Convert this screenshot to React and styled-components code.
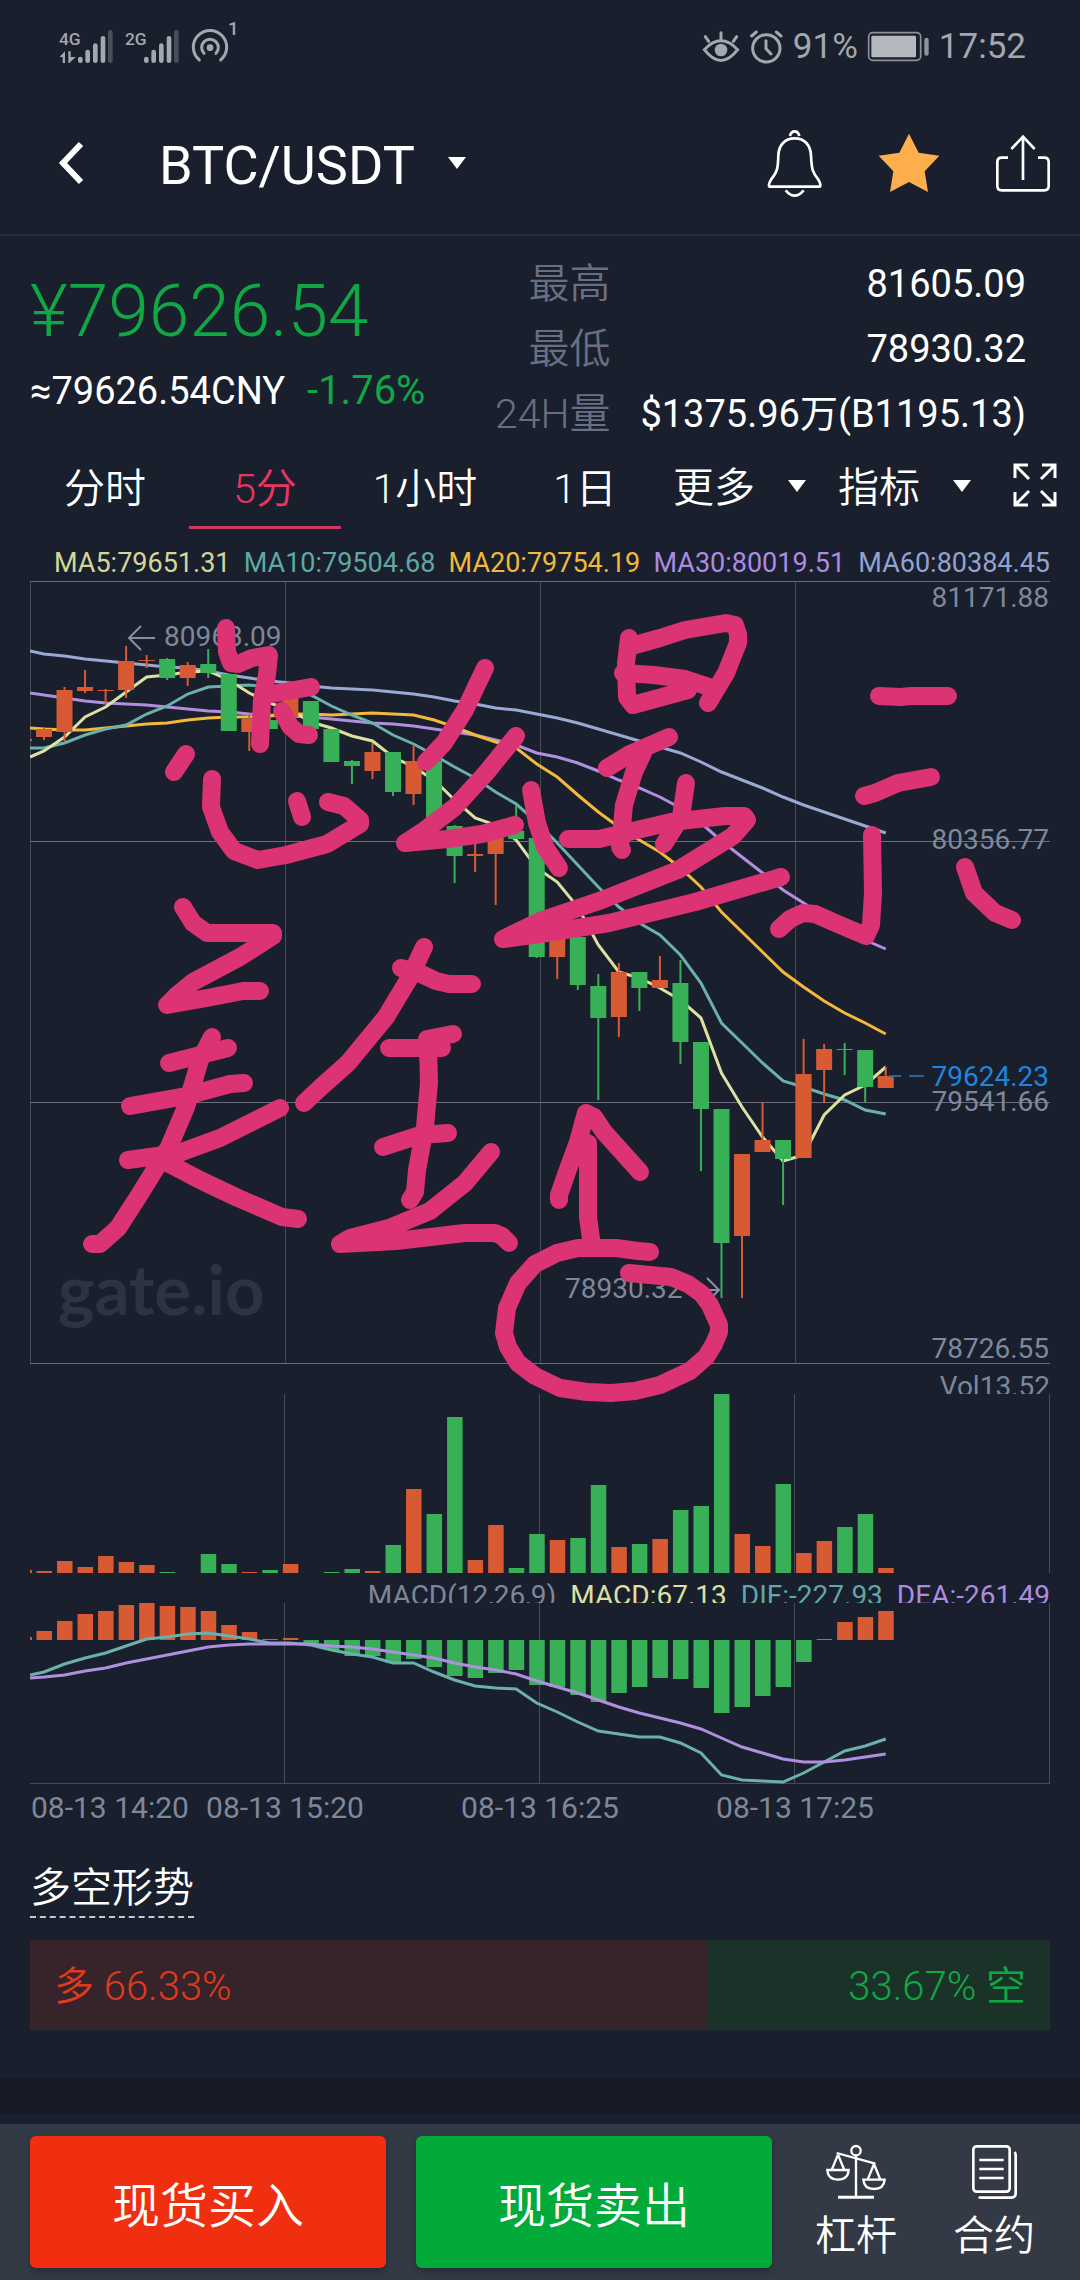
import React, { useState } from "react";
import styled, { createGlobalStyle } from "styled-components";

const UP = "#d85a33";
const DOWN = "#38b058";

// x of the first full candle and the distance between candles
const FIRST_X = 44;
const STEP = 20.53;
const xOf = (i) => FIRST_X + STEP * i;

// [up, high, top, bottom, low]
const candles = [
  [1, 727, 729, 737, 740], [1, 687, 690, 732, 741], [1, 670, 687, 691, 693],
  [1, 689, 690, 691, 704], [1, 646, 661, 690, 698], [1, 655, 660, 661, 668],
  [0, 658, 659, 678, 680], [1, 662, 665, 678, 686], [0, 649, 664, 673, 678],
  [0, 674, 674, 731, 731], [1, 714, 719, 732, 751], [0, 717, 720, 729, 729],
  [1, 692, 697, 717, 719], [0, 701, 701, 729, 729], [0, 729, 729, 762, 762],
  [0, 760, 761, 766, 784], [1, 743, 752, 771, 779], [0, 752, 752, 792, 796],
  [1, 746, 761, 794, 805], [0, 761, 761, 827, 827], [0, 825, 826, 856, 883],
  [1, 842, 854, 856, 872], [1, 832, 837, 854, 905], [0, 805, 831, 839, 839],
  [0, 838, 838, 957, 958], [1, 930, 935, 957, 979], [0, 937, 937, 985, 990],
  [0, 974, 986, 1018, 1100], [1, 963, 972, 1017, 1037], [0, 972, 972, 988, 1011],
  [1, 956, 980, 988, 988], [0, 960, 983, 1042, 1064], [0, 1042, 1042, 1109, 1171],
  [0, 1109, 1109, 1243, 1298], [1, 1154, 1154, 1236, 1298], [1, 1102, 1140, 1152, 1152],
  [0, 1140, 1140, 1159, 1205], [1, 1039, 1074, 1158, 1158], [1, 1044, 1049, 1070, 1103],
  [0, 1043, 1049, 1050, 1075], [0, 1050, 1050, 1087, 1102], [1, 1067, 1076, 1088, 1088],
];

const volumes = [
  2, 12, 6, 17, 11, 8, 1, 0, 19, 9, 1, 3, 9, 0, 1, 4, 2, 28, 84, 59, 156, 13, 48, 5,
  39, 33, 35, 88, 26, 29, 34, 63, 67, 180, 39, 27, 89, 20, 32, 46, 59, 5,
];

const macd = [
  9, 19, 26, 29, 35, 37, 34, 33, 29, 15, 8, 1, 2, -3, -10, -16, -16, -23, -19, -27, -36,
  -38, -33, -30, -45, -47, -55, -62, -53, -47, -38, -39, -48, -73, -67, -56, -47, -22,
  1, 18, 23, 29,
];

// the first value of every line is at the left edge of the panel
const averages = [
  {
    color: "#9aa8d4",
    ys: [651, 654, 656, 659, 661, 663, 665, 667, 668, 671, 675, 678, 681, 683, 686, 688, 689, 690, 692, 694, 697, 701, 704, 708, 710, 714, 718, 723, 729, 735, 741, 747, 753, 762, 772, 780, 788, 797, 805, 812, 819, 826, 833],
  },
  {
    color: "#b08fe0",
    ys: [693, 695, 698, 701, 703, 704, 705, 707, 709, 711, 712, 714, 715, 716, 717, 719, 721, 723, 724, 726, 729, 732, 735, 740, 745, 753, 757, 763, 771, 780, 788, 797, 808, 823, 841, 857, 873, 890, 903, 917, 928, 940, 949],
  },
  {
    color: "#f2b93b",
    ys: [728, 729, 730, 730, 728, 726, 724, 723, 720, 718, 717, 717, 716, 714, 714, 715, 714, 713, 714, 715, 720, 727, 735, 742, 748, 764, 777, 795, 812, 827, 840, 852, 868, 887, 912, 932, 952, 972, 987, 1001, 1013, 1023, 1034],
  },
  {
    color: "#6bb0ab",
    ys: [748, 748, 743, 735, 729, 725, 714, 706, 694, 687, 686, 685, 687, 690, 695, 706, 715, 723, 735, 744, 755, 767, 778, 792, 804, 822, 843, 865, 887, 907, 923, 935, 955, 983, 1023, 1043, 1063, 1081, 1087, 1094, 1100, 1110, 1114],
  },
  {
    color: "#dde0a0",
    ys: [757, 751, 737, 717, 707, 692, 677, 675, 672, 671, 680, 693, 703, 710, 722, 728, 736, 741, 757, 767, 780, 800, 818, 825, 840, 868, 882, 907, 945, 972, 978, 988, 1000, 1018, 1073, 1107, 1137, 1161, 1155, 1115, 1095, 1085, 1067],
  },
];

const dif = [1675, 1672, 1664, 1658, 1653, 1646, 1639, 1637, 1634, 1633, 1636, 1639, 1643, 1643, 1645, 1650, 1654, 1657, 1663, 1663, 1672, 1680, 1686, 1688, 1689, 1703, 1712, 1722, 1731, 1734, 1737, 1737, 1743, 1753, 1775, 1780, 1781, 1782, 1773, 1762, 1751, 1746, 1739];
const dea = [1678, 1677, 1675, 1671, 1668, 1663, 1659, 1655, 1651, 1647, 1645, 1644, 1644, 1644, 1644, 1646, 1647, 1649, 1652, 1655, 1658, 1663, 1667, 1670, 1674, 1681, 1687, 1693, 1700, 1707, 1713, 1718, 1723, 1729, 1738, 1747, 1753, 1759, 1762, 1762, 1760, 1757, 1754];

const maLabels = [
  { text: "MA5:79651.31", color: "#d3d79a" },
  { text: "MA10:79504.68", color: "#5fa8a3" },
  { text: "MA20:79754.19", color: "#f2b93b" },
  { text: "MA30:80019.51", color: "#ab8ce0" },
  { text: "MA60:80384.45", color: "#93a2d0" },
];

const macdLabels = [
  { text: "MACD(12,26,9)", color: "#7e8799" },
  { text: "MACD:67.13", color: "#dde0a0" },
  { text: "DIF:-227.93", color: "#5fa8a3" },
  { text: "DEA:-261.49", color: "#ab8ce0" },
];

// pen strokes over the chart
const strokes = [
  "226,628 227,652 231,663 238,664 252,658 269,655 267,675 262,700 260,744",
  "272,694 311,687",
  "282,711 290,726 299,734 309,735",
  "186,754 174,772",
  "212,779 211,807 220,832 234,851 258,860 286,855 327,844 360,824 360,820 344,806 328,802",
  "297,801 302,817",
  "485,668 465,710 444,743 426,762",
  "516,736 486,773 455,807 425,830 405,843 448,839 482,834 515,825",
  "531,790 537,823 545,847 559,868",
  "629,638 626,663 627,697 633,705 688,690",
  "635,645 660,638 685,630 726,623 735,625 738,634 738,643 726,673 708,703",
  "623,673 654,675 685,679 709,687",
  "607,768 630,754 669,737",
  "643,753 634,772 624,805 620,847 622,850",
  "686,783 681,817 664,844",
  "568,839 599,839 671,822 725,816 744,816 747,820 733,836 678,870 602,900 540,921 503,939 540,934 609,923 695,902 781,877",
  "879,696 900,697 912,696 948,696",
  "864,796 875,793 898,783 931,777",
  "872,835 873,893 871,925 866,936 840,925 815,914 803,913 790,919 779,929",
  "965,867 974,893 995,913 1012,920",
  "183,907 193,923 207,933 273,933 273,936 240,957 193,982 176,996 167,1005 207,998 243,991 260,991",
  "169,1063 228,1048",
  "130,1106 186,1096 230,1084 244,1083",
  "212,1037 200,1060 186,1107 169,1147 138,1197 118,1228 100,1244 92,1244",
  "128,1160 179,1153 220,1138 280,1108",
  "162,1160 200,1180 238,1198 282,1217 298,1219",
  "424,947 410,977 386,1017 348,1063 320,1088 304,1103",
  "401,968 417,972 436,981 449,984 472,984",
  "389,1048 442,1048",
  "427,1039 453,1034",
  "428,1047 429,1083 425,1127 417,1170 415,1192 410,1200",
  "383,1147 420,1135 448,1133",
  "491,1152 465,1183 430,1211 389,1228 350,1238 340,1244 396,1241 465,1233 495,1233 502,1236 509,1243",
  "559,1200 559,1195 567,1172 578,1142 586,1113 594,1117 604,1132 640,1172",
  "588,1143 588,1217 592,1246",
  "650,1252 638,1251 616,1248 578,1248 557,1253 535,1264 518,1283 507,1308 504,1333 508,1347 518,1363 535,1376 560,1388 587,1392 611,1393 635,1391 660,1385 690,1371 706,1357 714,1344 719,1332 719,1325 710,1305 702,1294 688,1284 671,1277 629,1273",
];

const linePoints = (ys) =>
  ys.map((y, i) => `${i === 0 ? 30 : xOf(i - 1)},${y}`).join(" ");

const SignalIcon = ({ label, data }) => (
  <Icon width="54" height="35" viewBox="0 0 162 105">
    <StatusSvgText x="0" y="47" fontSize="52">{label}</StatusSvgText>
    {data && <path d="M3 82 18 67V102H11V84H3ZM28 67H35V84H50L31 102H28Z" fill="#a3a7af" />}
    <g stroke="#a3a7af" strokeWidth="14" strokeLinecap="round">
      <path d="M64 90v5M86 69v26M109 50v45M132 28v67" />
      <path d="M154 10v85" stroke="#484e5a" />
    </g>
  </Icon>
);

const StatusBar = () => (
  <StatusRow>
    <StatusGroup $gap={12}>
      <SignalIcon label="4G" data />
      <SignalIcon label="2G" />
      <Icon width="60" height="52" viewBox="0 0 180 156">
        <g fill="none" stroke="#a3a7af" strokeWidth="9" strokeLinecap="round">
          <path d="M25 120A50 50 0 1 1 89 120" />
          <path d="M39 100A25 25 0 1 1 75 100" />
        </g>
        <circle cx="57" cy="83" r="10" fill="#a3a7af" />
        <StatusSvgText x="111" y="46" fontSize="56">1</StatusSvgText>
      </Icon>
    </StatusGroup>
    <StatusGroup $gap={9}>
      <Icon width="38" height="33" viewBox="0 0 114 99">
        <g fill="none" stroke="#a3a7af" strokeWidth="9" strokeLinecap="round">
          <path d="M7 59Q57 6 107 59Q57 124 7 59Z" />
          <path d="M57 8V28M10 20 20 34M104 20 94 34" />
        </g>
        <circle cx="57" cy="60" r="19" fill="#a3a7af" />
      </Icon>
      <Icon width="35" height="33" viewBox="0 0 105 99">
        <g fill="none" stroke="#a3a7af" strokeWidth="9" strokeLinecap="round">
          <circle cx="52" cy="55" r="41" />
          <path d="M51 32V56L66 72M8 18 22 6M96 18 82 6" />
        </g>
      </Icon>
      <span>91%</span>
      <Icon width="63" height="31" viewBox="0 0 189 93">
        <rect x="5" y="5" width="156" height="83" rx="12" fill="none" stroke="#8d929b" strokeWidth="5" />
        <rect x="13" y="14" width="134" height="65" rx="4" fill="#b5b8bd" />
        <rect x="172" y="20" width="13" height="54" rx="6" fill="#8d929b" />
      </Icon>
      <span>17:52</span>
    </StatusGroup>
  </StatusRow>
);

const Caret = () => (
  <Icon width="20" height="14" viewBox="0 0 20 14">
    <path d="M1 1H19L10 13Z" fill="#fff" />
  </Icon>
);

const PairHeader = () => (
  <HeaderRow>
    <IconButton aria-label="返回">
      <Icon width="28" height="44" viewBox="0 0 28 44">
        <path d="M24 3 6 22 24 41" fill="none" stroke="#fff" strokeWidth="6" />
      </Icon>
    </IconButton>
    <PairPicker>
      <PairSelect aria-label="交易对">
        <option>BTC/USDT</option>
      </PairSelect>
      <Caret />
    </PairPicker>
    <HeaderActions>
      <IconButton aria-label="提醒">
        <Icon width="56" height="69" viewBox="0 0 168 207">
          <g fill="none" stroke="#fff" strokeWidth="8">
            <path d="M83 28C52 28 35 50 34 80C33 120 30 130 12 152C6 161 4 172 8 173H158C162 172 160 161 154 152C136 130 134 120 132 80C131 50 114 28 83 28Z" />
            <path d="M69 21Q72 7 83 7Q94 7 97 21" />
            <path d="M56 184Q83 216 110 184" />
          </g>
        </Icon>
      </IconButton>
      <IconButton aria-label="收藏">
        <Icon width="62" height="60" viewBox="0 0 186 180">
          <path d="M93 2 122 59 184 68 140 115 150 177 93 147 36 177 46 115 2 68 64 59Z" fill="#ffae4d" />
        </Icon>
      </IconButton>
      <IconButton aria-label="分享">
        <Icon width="56" height="59" viewBox="0 0 168 177">
          <g fill="none" stroke="#fff" strokeWidth="8">
            <path d="M39 71H20Q7 71 7 84V156Q7 169 20 169H148Q161 169 161 156V84Q161 71 148 71H129" />
            <path d="M84 138V10M49 45 84 8 119 45" />
          </g>
        </Icon>
      </IconButton>
    </HeaderActions>
  </HeaderRow>
);

const Quote = () => (
  <QuoteRow>
    <div>
      <Price>¥79626.54</Price>
      <SubPrice>
        <span>≈79626.54CNY</span>
        <Change>-1.76%</Change>
      </SubPrice>
    </div>
    <Stats>
      <dt>最高</dt>
      <dd>81605.09</dd>
      <dt>最低</dt>
      <dd>78930.32</dd>
      <dt>24H量</dt>
      <dd>$1375.96万(B1195.13)</dd>
    </Stats>
  </QuoteRow>
);

const PeriodBar = () => {
  const [period, setPeriod] = useState("5分");

  return (
    <PeriodRow>
      {["分时", "5分", "1小时", "1日"].map((name) => (
        <PeriodTab key={name} $active={name === period} onClick={() => setPeriod(name)}>
          {name}
        </PeriodTab>
      ))}
      {["更多", "指标"].map((name) => (
        <PeriodMenu key={name}>
          <MenuSelect aria-label={name}>
            <option>{name}</option>
          </MenuSelect>
          <Caret />
        </PeriodMenu>
      ))}
      <ExpandButton aria-label="全屏">
        <Icon width="44" height="44" viewBox="0 0 44 44">
          <g fill="none" stroke="#fff" strokeWidth="3">
            <path d="M15 2H2V15M2 2 16 16M29 2H42V15M42 2 28 16" />
            <path d="M15 42H2V29M2 42 16 28M29 42H42V29M42 42 28 28" />
          </g>
        </Icon>
      </ExpandButton>
    </PeriodRow>
  );
};

const CandlePanel = () => (
  <Panel viewBox="30 581 1020 783">
    <g stroke="#454b59" strokeWidth="1">
      <path d="M30.5 581V1364M285.5 581V1364M540.5 581V1364M795.5 581V1364" />
      <path d="M30 581.5H1050M30 841.5H1050M30 1102.5H1050M30 1363.5H1050" stroke="#686e7b" />
    </g>
    <Watermark x="58" y="1315">gate.io</Watermark>
    {averages.map((line) => (
      <polyline key={line.color} points={linePoints(line.ys)} fill="none" stroke={line.color} strokeWidth="3" />
    ))}
    <rect x="30" y="739" width="2" height="2" fill={UP} />
    {candles.map(([up, high, top, bottom, low], i) => (
      <g key={i} fill={up ? UP : DOWN}>
        <rect x={xOf(i) - 1} y={high} width="2" height={low - high} />
        <rect x={xOf(i) - 8} y={top} width="16" height={bottom - top} />
      </g>
    ))}
    <g fill="none" stroke="#8790a3" strokeWidth="2">
      <path d="M155 638H129M141 626 129 638 141 650" />
      <path d="M686 1290H719M707 1278 719 1290 707 1302" />
    </g>
    <AxisText x="164" y="646">80963.09</AxisText>
    <AxisText x="565" y="1298">78930.32</AxisText>
    <path d="M889 1076H901M909 1076H924" stroke="#2a6299" strokeWidth="2" />
    <AxisText x="1049" y="607" textAnchor="end">81171.88</AxisText>
    <AxisText x="1049" y="849" textAnchor="end">80356.77</AxisText>
    <AxisText x="1049" y="1086" textAnchor="end" $color="#1e86dd">79624.23</AxisText>
    <AxisText x="1049" y="1111" textAnchor="end">79541.66</AxisText>
    <AxisText x="1049" y="1358" textAnchor="end">78726.55</AxisText>
  </Panel>
);

const VolumePanel = () => (
  <Panel viewBox="30 1394 1020 179">
    <path d="M284.5 1394V1573M539.5 1394V1573M794.5 1394V1573M1049.5 1394V1573" stroke="#454b59" />
    <rect x="30" y="1570" width="2" height="3" fill={UP} />
    {volumes.map((v, i) => (
      <rect key={i} x={xOf(i) - 7.5} y={1573 - v} width="15.5" height={v} fill={candles[i][0] ? UP : DOWN} />
    ))}
  </Panel>
);

const MacdPanel = () => (
  <Panel viewBox="30 1603 1020 227">
    <path d="M284.5 1603V1784M539.5 1603V1784M794.5 1603V1784M1049.5 1603V1784M30 1783.5H1050" fill="none" stroke="#454b59" />
    <rect x="30" y="1637" width="2" height="3" fill={UP} />
    {macd.map((v, i) => (
      <rect key={i} x={xOf(i) - 7.5} y={v > 0 ? 1640 - v : 1640} width="15.5" height={Math.abs(v)} fill={v > 0 ? UP : DOWN} />
    ))}
    <polyline points={linePoints(dif)} fill="none" stroke="#6bb0ab" strokeWidth="3" />
    <polyline points={linePoints(dea)} fill="none" stroke="#b08fe0" strokeWidth="3" />
    <DateText x="31" y="1818">08-13 14:20</DateText>
    <DateText x="285" y="1818" textAnchor="middle">08-13 15:20</DateText>
    <DateText x="540" y="1818" textAnchor="middle">08-13 16:25</DateText>
    <DateText x="795" y="1818" textAnchor="middle">08-13 17:25</DateText>
  </Panel>
);

const Chart = () => (
  <ChartWrap>
    <MaRow>
      {maLabels.map((l) => (
        <Legend key={l.text} $color={l.color}>{l.text}</Legend>
      ))}
    </MaRow>
    <PanelStack>
      <CandlePanel />
      <LegendRow>
        <Legend $color="#7e8799">Vol13.52</Legend>
      </LegendRow>
      <VolumePanel />
      <LegendRow>
        {macdLabels.map((l) => (
          <Legend key={l.text} $color={l.color}>{l.text}</Legend>
        ))}
      </LegendRow>
      <MacdPanel />
      <PenLayer viewBox="30 581 1020 860">
        {strokes.map((points) => (
          <polyline key={points} points={points} />
        ))}
      </PenLayer>
    </PanelStack>
  </ChartWrap>
);

const longShare = 66.33;

const Sentiment = () => (
  <SentimentWrap>
    <SentimentTitle>多空形势</SentimentTitle>
    <Ratio>
      <RatioPart $long style={{ width: `${longShare}%` }}>多 66.33%</RatioPart>
      <RatioPart style={{ width: `${100 - longShare}%` }}>33.67% 空</RatioPart>
    </Ratio>
  </SentimentWrap>
);

const TradeBar = () => (
  <TradeRow>
    <TradeButton $color="#ef2f0f">现货买入</TradeButton>
    <TradeButton $color="#02aa3a">现货卖出</TradeButton>
    <TradeLinks>
      <TradeLink href="#margin">
        <Icon width="60" height="55" viewBox="0 0 180 165">
          <g fill="none" stroke="#fff" strokeWidth="7">
            <circle cx="90" cy="20" r="14" />
            <path d="M32 27 148 59M90 34V158" />
            <path d="M36 160H144" strokeWidth="9" />
            <path d="M36 32 17 78M36 32 55 78M4 78H68Q66 107 36 107Q6 107 4 78Z" />
            <path d="M144 60 125 107M144 60 163 107M112 107H176Q174 135 144 135Q114 135 112 107Z" />
          </g>
        </Icon>
        杠杆
      </TradeLink>
      <TradeLink href="#contract">
        <Icon width="45" height="55" viewBox="0 0 135 165">
          <g fill="none" stroke="#fff" strokeWidth="8">
            <rect x="4" y="7" width="109" height="136" rx="10" />
            <path d="M22 48H95M22 75H95M22 102H95" />
            <path d="M20 159Q22 161 30 161H118Q131 160 131 148V34Q131 28 128 24" />
          </g>
        </Icon>
        合约
      </TradeLink>
    </TradeLinks>
  </TradeRow>
);

const App = () => {
  return (
    <React.Fragment>
      <GlobalStyle />
      <StatusBar />
      <PairHeader />
      <Quote />
      <PeriodBar />
      <Chart />
      <Sentiment />
      <SectionGap />
      <TradeBar />
    </React.Fragment>
  );
};

const GlobalStyle = createGlobalStyle`
  * {
    box-sizing: border-box;
  }

  body {
    margin: 0;
    background: #191f2c;
    color: #ffffff;
    font-family: Roboto, "Noto Sans CJK SC", sans-serif;
    font-weight: 350;
  }

  button,
  select {
    margin: 0;
    padding: 0;
    border: none;
    background: none;
    color: inherit;
    font: inherit;
    appearance: none;
    cursor: pointer;
  }
`;

const Icon = styled.svg`
  display: block;
  flex-shrink: 0;
  overflow: visible;
`;

const StatusSvgText = styled.text`
  fill: #a3a7af;
  font-weight: 500;
`;

const StatusRow = styled.div`
  display: flex;
  justify-content: space-between;
  align-items: center;
  height: 92px;
  padding: 0 54px 0 59px;
  color: #a3a7af;
  font-size: 35px;
  font-weight: 400;
`;

const StatusGroup = styled.div`
  display: flex;
  align-items: center;
  gap: ${(props) => props.$gap}px;
`;

const HeaderRow = styled.header`
  display: flex;
  align-items: center;
  height: 144px;
  padding: 0 29px 0 57px;
  border-bottom: 2px solid #252b39;
`;

const IconButton = styled.button`
  display: flex;
  align-items: center;
`;

const PairPicker = styled.div`
  display: flex;
  align-items: center;
  gap: 32px;
  margin-left: 74px;
`;

const PairSelect = styled.select`
  padding-top: 4px;
  font-size: 54px;
  font-weight: 400;
`;

const HeaderActions = styled.div`
  display: flex;
  align-items: center;
  gap: 55px;
  margin-left: auto;
`;

const QuoteRow = styled.section`
  display: flex;
  justify-content: space-between;
  padding: 16px 54px 0 30px;
`;

const Price = styled.div`
  padding-top: 14px;
  color: #10a845;
  font-size: 73px;
  line-height: 90px;
`;

const SubPrice = styled.div`
  display: flex;
  gap: 22px;
  font-size: 38px;
  font-weight: 400;
  line-height: 70px;
`;

const Change = styled.span`
  color: #10a845;
  font-size: 40px;
`;

const Stats = styled.dl`
  display: grid;
  grid-template-columns: auto auto;
  column-gap: 30px;
  margin: 0;
  font-size: 38px;
  line-height: 65px;
  text-align: right;

  dt {
    color: #686f80;
    font-size: 41px;
  }

  dd {
    margin: 0;
    font-weight: 400;
  }
`;

const PeriodRow = styled.nav`
  display: flex;
  align-items: stretch;
  height: 82px;
  padding: 0 23px 0 25px;
  font-size: 41px;
`;

const PeriodTab = styled.button`
  flex: 1;
  margin: 0 4px;
  padding-bottom: 4px;
  border-bottom: 3px solid ${(props) => (props.$active ? "#c93a62" : "transparent")};
  color: ${(props) => (props.$active ? "#e83562" : "#ffffff")};
`;

const PeriodMenu = styled.div`
  flex: 0 0 165px;
  display: flex;
  align-items: center;
  gap: 32px;
  padding: 0 0 4px 8px;
`;

const MenuSelect = styled.select`
  height: 60px;
  padding-top: 4px;
`;

const ExpandButton = styled(IconButton)`
  padding: 0 0 6px 18px;
`;

const ChartWrap = styled.section`
  padding: 0 30px;
`;

const MaRow = styled.div`
  display: flex;
  justify-content: space-between;
  height: 52px;
  padding: 16px 0 0 24px;
  font-size: 27px;
  line-height: 36px;
`;

const Legend = styled.span`
  color: ${(props) => props.$color};
  font-weight: 400;
  white-space: nowrap;
`;

const PanelStack = styled.div`
  position: relative;
`;

const Panel = styled.svg`
  display: block;
  width: 100%;
  height: auto;
`;

const LegendRow = styled.div`
  display: flex;
  justify-content: flex-end;
  gap: 14px;
  height: 30px;
  padding-top: 7px;
  overflow: hidden;
  font-size: 28px;
  line-height: 32px;
`;

const PenLayer = styled.svg`
  position: absolute;
  top: 0;
  left: 0;
  width: 100%;
  fill: none;
  stroke: #dc3375;
  stroke-width: 18px;
  stroke-linecap: round;
  stroke-linejoin: round;
  pointer-events: none;
`;

const AxisText = styled.text`
  fill: ${(props) => props.$color || "#7f889b"};
  font-size: 28px;
  font-weight: 400;
`;

const DateText = styled.text`
  fill: #7f889b;
  font-size: 30px;
  font-weight: 400;
`;

const Watermark = styled.text`
  fill: #2d3441;
  font-family: Lato, sans-serif;
  font-size: 69px;
  font-weight: 700;
`;

const SentimentWrap = styled.section`
  padding: 30px 30px 48px;
`;

const SentimentTitle = styled.h2`
  width: fit-content;
  margin: 0 0 22px;
  border-bottom: 2px dashed #c5c8cd;
  font-size: 41px;
  font-weight: 350;
  line-height: 56px;
`;

const Ratio = styled.div`
  display: flex;
  line-height: 86px;
`;

const RatioPart = styled.div`
  padding: 4px 24px 0;
  background: ${(props) => (props.$long ? "#37232a" : "#1b3229")};
  color: ${(props) => (props.$long ? "#e03a1e" : "#10a845")};
  font-size: 40px;
  text-align: ${(props) => (props.$long ? "left" : "right")};
`;

const SectionGap = styled.div`
  height: 36px;
  margin-bottom: 10px;
  background: #151a25;
`;

const TradeRow = styled.footer`
  display: flex;
  gap: 30px;
  height: 156px;
  padding: 12px 45px 12px 30px;
  background: #343a45;
`;

const TradeButton = styled.button`
  flex: 1;
  border-radius: 6px;
  background: ${(props) => props.$color};
  box-shadow: 0 4px 6px rgba(0, 0, 0, 0.25);
  font-size: 48px;
`;

const TradeLinks = styled.div`
  display: flex;
  gap: 56px;
  padding-left: 13px;
`;

const TradeLink = styled.a`
  display: flex;
  flex-direction: column;
  align-items: center;
  gap: 10px;
  padding-top: 8px;
  color: #ffffff;
  font-size: 41px;
  line-height: 54px;
  text-decoration: none;
`;

export default App;
